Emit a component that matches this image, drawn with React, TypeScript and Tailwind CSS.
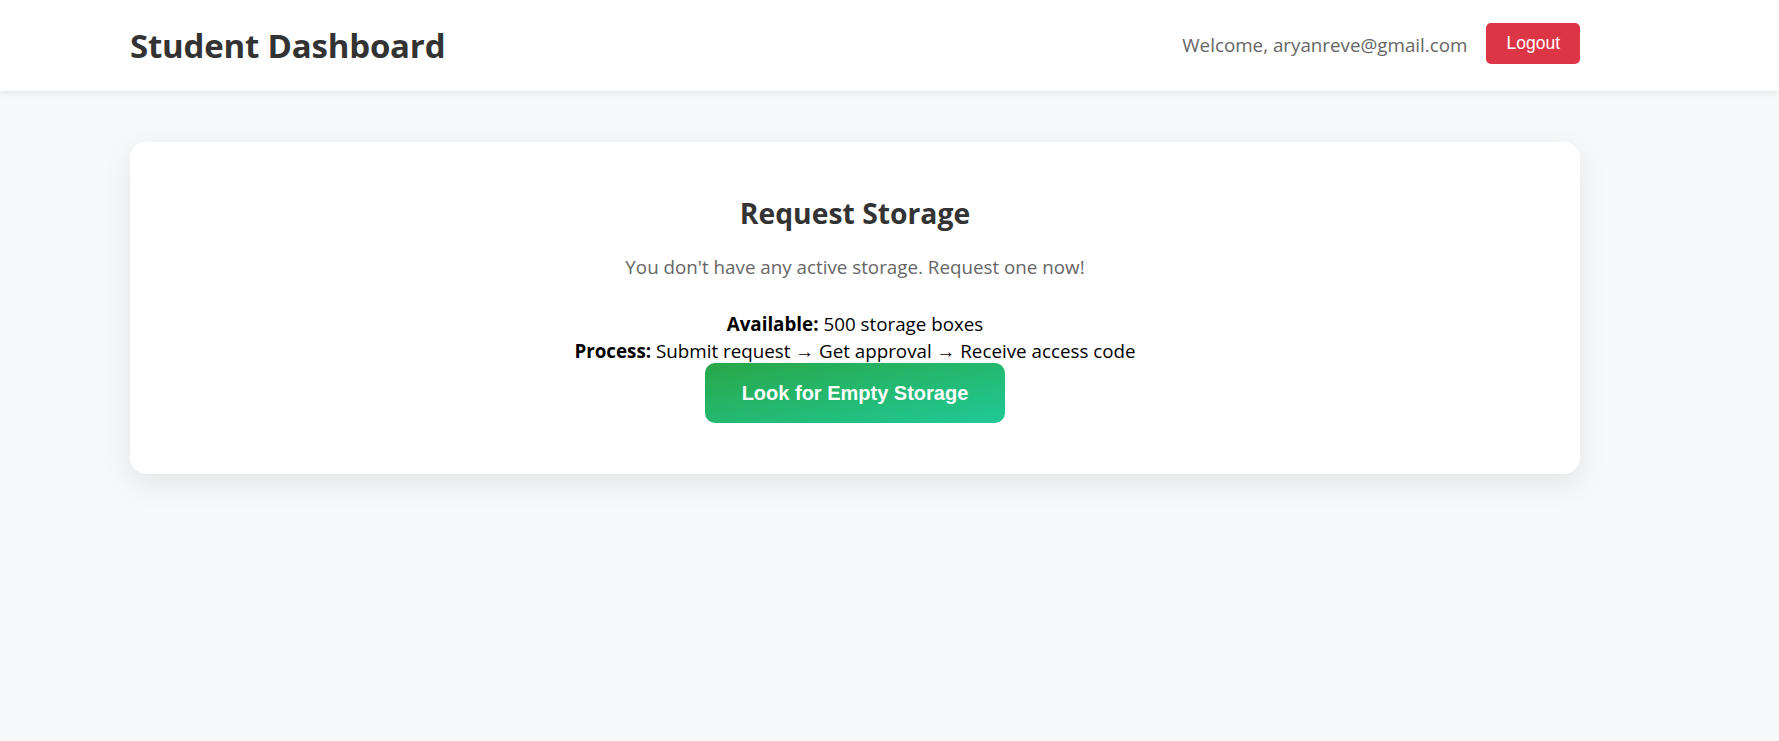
const App = () => {
    return (
        <div className="min-h-[741px] bg-[#f7f8fa] font-['Open_Sans',sans-serif]">
            <header className="bg-white h-[91px] shadow-[0_2px_6px_rgba(0,0,0,0.08)]">
                <div className="ml-[130px] w-[1450px] h-full flex items-center justify-between">
                    <h1 className="text-[33px] font-bold text-[#333] tracking-[-0.2px]">Student Dashboard</h1>
                    <div className="flex items-center gap-[19px]">
                        <span className="text-[18.8px] text-[#666]">Welcome, aryanreve@gmail.com</span>
                        <button className="-mt-[4px] bg-[#dc3545] text-white font-['Liberation_Sans',Arial,sans-serif] text-[17.5px] leading-[21px] px-[20px] py-[10px] rounded-[5px]">
                            Logout
                        </button>
                    </div>
                </div>
            </header>

            <main className="ml-[130px] w-[1450px] mt-[51px]">
                <section className="bg-white rounded-[16px] shadow-[0_10px_30px_rgba(0,0,0,0.08)] pt-[53px] pb-[51px] flex flex-col items-center text-center">
                    <h2 className="text-[28.3px] leading-[36px] font-bold text-[#333]">Request Storage</h2>
                    <p className="mt-[23px] text-[18.8px] leading-[26px] text-[#666]">
                        You don't have any active storage. Request one now!
                    </p>
                    <div className="mt-[31px] text-[18.8px] leading-[27px] text-black">
                        <p><strong>Available:</strong> 500 storage boxes</p>
                        <p>
                            <strong>Process:</strong> Submit request <span className="font-['Liberation_Sans',sans-serif]">→</span> Get approval <span className="font-['Liberation_Sans',sans-serif]">→</span> Receive access code
                        </p>
                    </div>
                    <button className="-mt-[2px] bg-gradient-to-br from-[#28a745] to-[#20c997] text-white font-['Liberation_Sans',Arial,sans-serif] font-bold text-[20px] leading-[24px] px-[37px] py-[18px] rounded-[10px]">
                        Look for Empty Storage
                    </button>
                </section>
            </main>
        </div>
    );
};

export default App;
